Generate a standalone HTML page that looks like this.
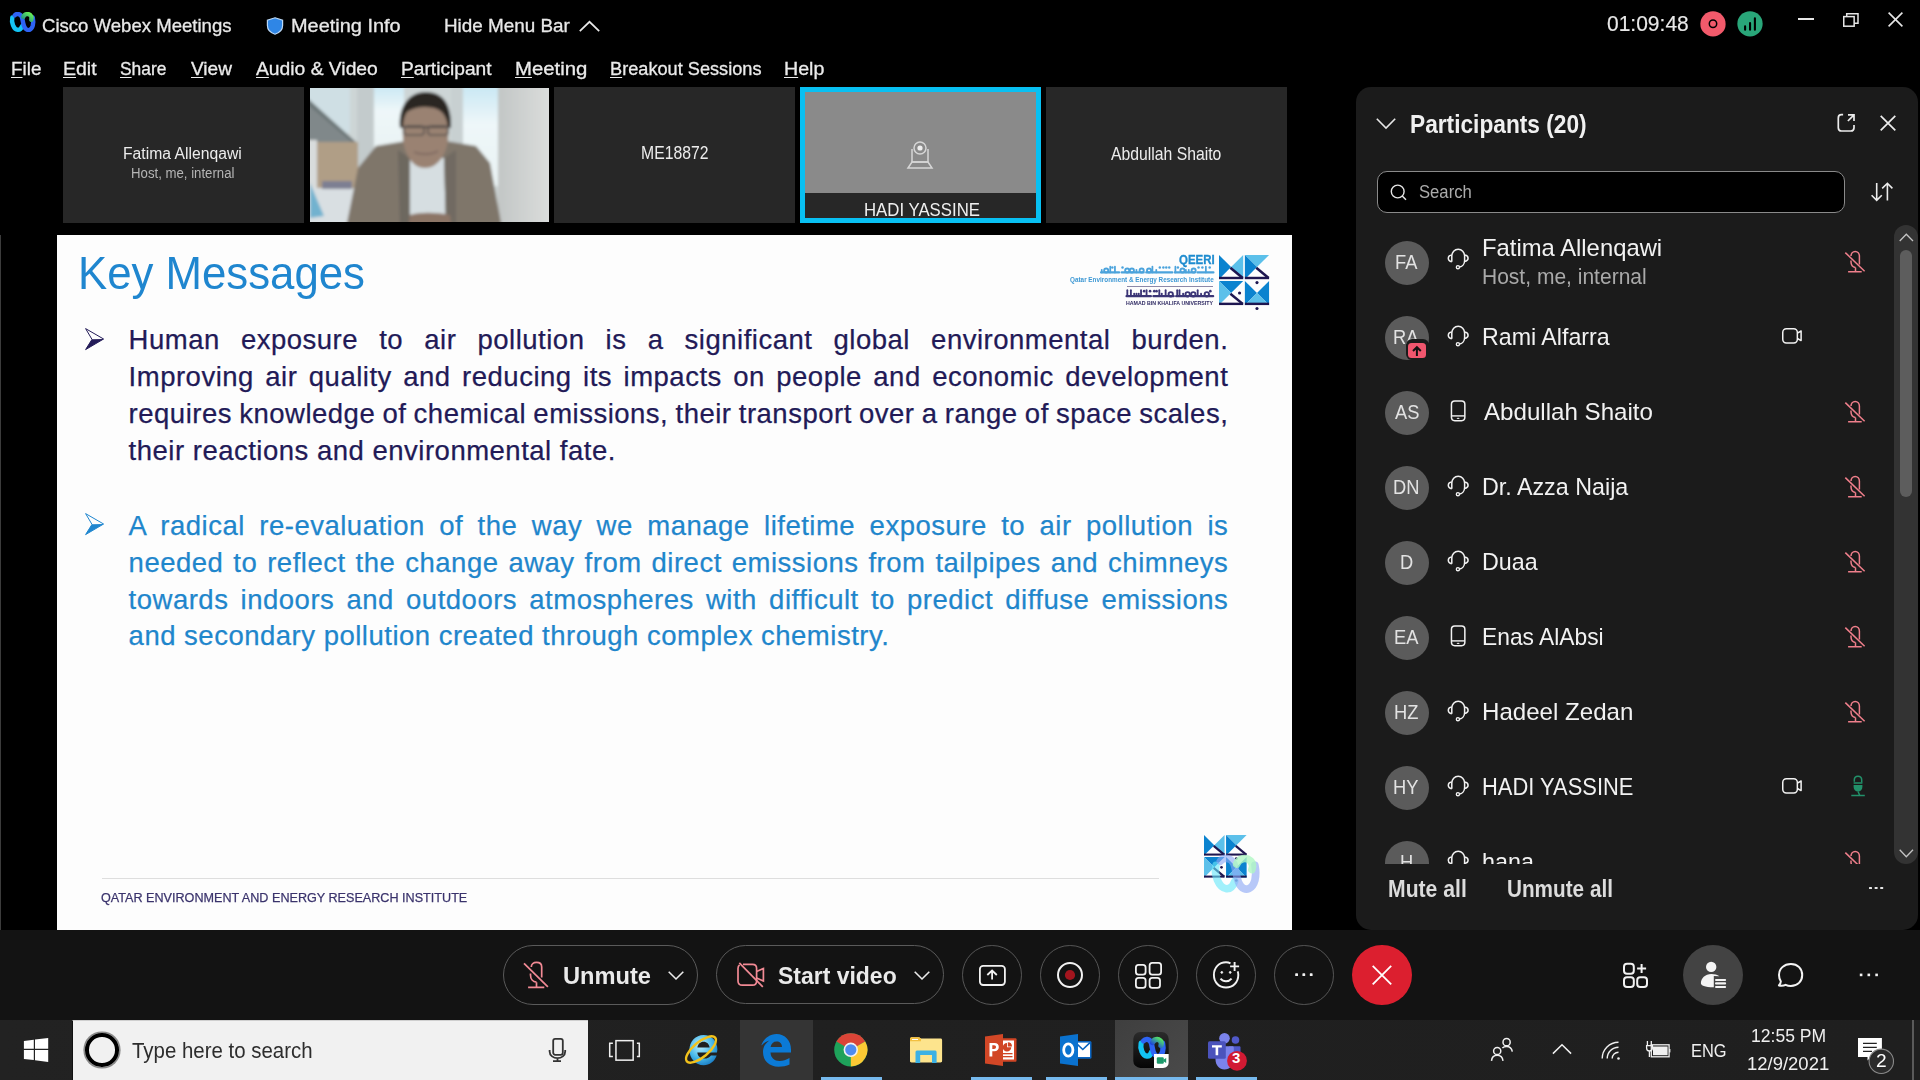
<!DOCTYPE html>
<html><head><meta charset="utf-8">
<style>
*{margin:0;padding:0;box-sizing:border-box}
html,body{width:1920px;height:1080px;overflow:hidden;background:#000}
body{position:relative;font-family:"Liberation Sans",sans-serif;color:#fff}
.a{position:absolute}
.t{position:absolute;white-space:pre;line-height:1}
svg{position:absolute;overflow:visible}
.ln{position:absolute;white-space:nowrap;line-height:1;text-align:justify;text-align-last:justify;-webkit-text-stroke:0.25px currentColor}
.ln.nj{text-align:left;text-align-last:left}
.tile{position:absolute;top:87px;width:241px;height:136px;background:#272727}
.circ{position:absolute;top:945.2px;width:59.6px;height:59.6px;border-radius:50%;border:1.8px solid #565656}
</style></head>
<body>

<svg style="left:6px;top:8.8px" width="34" height="26" viewBox="0 0 34 26">
<defs><linearGradient id="wxg" x1="0" y1="1" x2="1" y2="0"><stop offset="0" stop-color="#1e8f86"/><stop offset="1" stop-color="#66ee55"/></linearGradient>
<filter id="wxf"><feGaussianBlur stdDeviation="0.35"/></filter></defs>
<g filter="url(#wxf)" fill="none" stroke-width="4.4" stroke-linecap="round">
<path d="M6.3 8.6 C5.2 13.5 7.6 20.4 11.8 20.9 C14 21.1 15.4 19.3 16.2 17" stroke="#12c4f4"/>
<path d="M8.6 6.4 C10.3 4.3 14 4.3 15.6 7.6 C17.2 11 16.7 16.8 19.6 19.8 C22.2 22.4 25.6 21 26.8 16.5 C27.5 13.5 27.2 10.5 26.8 8.6" stroke="#2e64f4"/>
<path d="M17.2 8 C18.4 4.8 22.2 4.2 24.4 6.2 C25.4 7.2 25.8 9 25.2 10.8" stroke="url(#wxg)"/>
</g></svg>
<div class="t" style="left:41.57px;top:15.88px;font-size:19.04px;color:#e8e8e8;transform:scaleX(0.9754);transform-origin:0 0;-webkit-text-stroke:0.3px #e8e8e8;">Cisco Webex Meetings</div>
<svg style="left:265.5px;top:17px" width="18" height="18" viewBox="0 0 18 18">
<path d="M9 0.8 L16.6 3.3 V8.6 C16.6 13 13 16 9 17.2 C5 16 1.4 13 1.4 8.6 V3.3 Z" fill="#2f86e6" stroke="#bcd9f7" stroke-width="1.2"/></svg>
<div class="t" style="left:291.11px;top:17.15px;font-size:18.60px;color:#e8e8e8;transform:scaleX(1.0716);transform-origin:0 0;-webkit-text-stroke:0.3px #e8e8e8;">Meeting Info</div>
<div class="t" style="left:444.39px;top:17.15px;font-size:18.60px;color:#e8e8e8;transform:scaleX(1.0142);transform-origin:0 0;-webkit-text-stroke:0.3px #e8e8e8;">Hide Menu Bar</div>
<svg style="left:579px;top:20.5px" width="21" height="11" viewBox="0 0 21 11"><path d="M0.8 10.2 L10.5 0.8 L20.2 10.2" fill="none" stroke="#e8e8e8" stroke-width="1.7"/></svg>
<div class="t" style="left:1607.06px;top:11.71px;font-size:22.67px;color:#e8e8e8;transform:scaleX(0.9268);transform-origin:0 0;-webkit-text-stroke:0.15px #e8e8e8;">01:09:48</div>
<svg style="left:1700px;top:11px" width="64" height="26" viewBox="0 0 64 26">
<circle cx="13" cy="12.9" r="12.65" fill="#f25a6b"/><circle cx="13" cy="12.75" r="3.7" fill="none" stroke="#000" stroke-width="1.5"/>
<circle cx="50" cy="12.8" r="12.65" fill="#29a679"/>
<path d="M45.1 15.4 V18.7 M50.05 12 V18.7 M54.9 7.2 V18.7" stroke="#000" stroke-width="2.1" stroke-linecap="round"/></svg>
<div class="a" style="left:1798.3px;top:18.3px;width:15.5px;height:1.5px;background:#e6e6e6"></div>
<svg style="left:1843.3px;top:12.6px" width="16" height="14" viewBox="0 0 16 14"><rect x="0.75" y="3.6" width="10.4" height="9.6" fill="none" stroke="#e6e6e6" stroke-width="1.5"/><path d="M3.7 3.6 V0.75 H15 V10.3 H11.15" fill="none" stroke="#e6e6e6" stroke-width="1.5"/></svg>
<svg style="left:1888.3px;top:12.3px" width="15" height="15" viewBox="0 0 15 15"><path d="M0.6 0.6 L14.4 14.4 M14.4 0.6 L0.6 14.4" stroke="#e6e6e6" stroke-width="1.6"/></svg>

<div class="t" style="left:10.99px;top:60.27px;font-size:18.46px;color:#ebebeb;transform:scaleX(1.0215);transform-origin:0 0;-webkit-text-stroke:0.3px #ebebeb;"><span style="text-decoration:underline;text-decoration-thickness:1.2px;text-underline-offset:1.6px">F</span>ile</div>
<div class="t" style="left:63.44px;top:60.27px;font-size:18.46px;color:#ebebeb;transform:scaleX(1.0568);transform-origin:0 0;-webkit-text-stroke:0.3px #ebebeb;"><span style="text-decoration:underline;text-decoration-thickness:1.2px;text-underline-offset:1.6px">E</span>dit</div>
<div class="t" style="left:120.22px;top:60.27px;font-size:18.46px;color:#ebebeb;transform:scaleX(0.9440);transform-origin:0 0;-webkit-text-stroke:0.3px #ebebeb;"><span style="text-decoration:underline;text-decoration-thickness:1.2px;text-underline-offset:1.6px">S</span>hare</div>
<div class="t" style="left:191.00px;top:60.27px;font-size:18.46px;color:#ebebeb;transform:scaleX(1.0320);transform-origin:0 0;-webkit-text-stroke:0.3px #ebebeb;"><span style="text-decoration:underline;text-decoration-thickness:1.2px;text-underline-offset:1.6px">V</span>iew</div>
<div class="t" style="left:256.40px;top:60.27px;font-size:18.46px;color:#ebebeb;transform:scaleX(1.0449);transform-origin:0 0;-webkit-text-stroke:0.3px #ebebeb;"><span style="text-decoration:underline;text-decoration-thickness:1.2px;text-underline-offset:1.6px">A</span>udio &amp; Video</div>
<div class="t" style="left:400.96px;top:60.27px;font-size:18.46px;color:#ebebeb;transform:scaleX(1.0399);transform-origin:0 0;-webkit-text-stroke:0.3px #ebebeb;"><span style="text-decoration:underline;text-decoration-thickness:1.2px;text-underline-offset:1.6px">P</span>articipant</div>
<div class="t" style="left:515.17px;top:60.27px;font-size:18.46px;color:#ebebeb;transform:scaleX(1.1036);transform-origin:0 0;-webkit-text-stroke:0.3px #ebebeb;"><span style="text-decoration:underline;text-decoration-thickness:1.2px;text-underline-offset:1.6px">M</span>eeting</div>
<div class="t" style="left:610.14px;top:60.27px;font-size:18.46px;color:#ebebeb;transform:scaleX(0.9856);transform-origin:0 0;-webkit-text-stroke:0.3px #ebebeb;"><span style="text-decoration:underline;text-decoration-thickness:1.2px;text-underline-offset:1.6px">B</span>reakout Sessions</div>
<div class="t" style="left:784.43px;top:60.27px;font-size:18.46px;color:#ebebeb;transform:scaleX(1.0636);transform-origin:0 0;-webkit-text-stroke:0.3px #ebebeb;"><span style="text-decoration:underline;text-decoration-thickness:1.2px;text-underline-offset:1.6px">H</span>elp</div>
<div class="tile" style="left:63px"></div>
<div class="t" style="left:123.04px;top:145.10px;font-size:16.42px;color:#ececec;transform:scaleX(0.9573);transform-origin:0 0;">Fatima Allenqawi</div>
<div class="t" style="left:131.24px;top:167.49px;font-size:13.95px;color:#b5b5b5;transform:scaleX(0.9473);transform-origin:0 0;">Host, me, internal</div>
<div class="tile" style="left:309px;overflow:hidden;background:#000"></div>
<svg style="left:310px;top:88px;overflow:hidden" width="239" height="134" viewBox="0 0 239 134">
<defs><filter id="vb" x="-5%" y="-5%" width="110%" height="110%"><feGaussianBlur stdDeviation="1.6"/></filter>
<linearGradient id="rw" x1="0" y1="0" x2="1" y2="0"><stop offset="0" stop-color="#c2c6c5"/><stop offset="1" stop-color="#dcdedd"/></linearGradient>
<linearGradient id="win" x1="0" y1="0" x2="0" y2="1"><stop offset="0" stop-color="#c6e6f3"/><stop offset="0.4" stop-color="#eef7f9"/><stop offset="1" stop-color="#e9f2f3"/></linearGradient></defs>
<g filter="url(#vb)">
<rect x="-5" y="-5" width="250" height="145" fill="#cdd5d6"/>
<rect x="-5" y="-5" width="45" height="50" fill="#cfdfe4"/>
<rect x="64" y="-5" width="30" height="70" fill="url(#win)"/>
<rect x="47" y="-5" width="17" height="110" fill="#c3cbcc"/>
<rect x="153" y="-5" width="35" height="103" fill="url(#win)"/>
<rect x="141" y="-5" width="12" height="110" fill="#c8d0d1"/>
<rect x="188" y="-5" width="55" height="145" fill="url(#rw)"/>
<path d="M-5 8 L47 55 L47 62 L-5 40 Z" fill="#6a7476"/>
<path d="M-5 14 L44 56 L-5 56 Z" fill="#80888a"/>
<rect x="6" y="54" width="42" height="48" fill="#b09e86"/>
<rect x="-5" y="52" width="12" height="50" fill="#d8dcdc"/>
<rect x="-5" y="100" width="52" height="40" fill="#d9dfe2"/>
<path d="M0 95 L14 128 L0 130 Z" fill="#72b2cf"/>
<rect x="12" y="93" width="30" height="8" fill="#7d7f92"/>
<path d="M36 140 L48 80 L66 58 L96 53 L136 53 L166 58 L180 75 L192 140 Z" fill="#7f766b"/>
<path d="M98 70 L134 70 L136 140 L100 140 Z" fill="#d6dee1"/>
<path d="M88 62 L100 70 L100 140 L90 140 Z" fill="#6d675f"/>
<path d="M134 70 L146 62 L146 140 L136 140 Z" fill="#716b62"/>
<path d="M92 30 C92 18 102 8 116 8 C130 8 139 18 139 32 L138 52 C136 68 127 80 115 80 C103 80 95 68 93 52 Z" fill="#9a8272"/>
<path d="M90 40 C88 20 98 4 116 4 C134 4 142 18 141 40 L138 40 C137 28 132 22 124 20 C114 18 104 19 97 24 C94 28 93 34 93 40 Z" fill="#2b2523"/>
<path d="M92 39 H139" stroke="#4e4744" stroke-width="2"/>
<rect x="94" y="38" width="20" height="9" rx="3" fill="none" stroke="#5a534f" stroke-width="1.6"/><rect x="118" y="38" width="20" height="9" rx="3" fill="none" stroke="#5a534f" stroke-width="1.6"/>
<path d="M104 64 C110 67 122 67 128 63" stroke="#7d6860" stroke-width="1.6" fill="none"/>
<path d="M100 127 C110 124 125 124 140 127 L142 140 L98 140 Z" fill="#8c7466"/>
</g></svg>
<div class="tile" style="left:554px"></div>
<div class="t" style="left:640.54px;top:144.44px;font-size:18.02px;color:#ececec;transform:scaleX(0.8747);transform-origin:0 0;">ME18872</div>
<div class="tile" style="left:800px;background:#08c0f2">
 <div class="a" style="left:5px;top:5px;width:231px;height:101px;background:#8a8a8a"></div>
 <div class="a" style="left:5px;top:106px;width:231px;height:25px;background:#272727"></div>
</div>
<svg style="left:906px;top:141px" width="28" height="28" viewBox="0 0 28 28" fill="none" stroke="#d6d6d6" stroke-width="1.5">
<circle cx="14" cy="7" r="6"/><circle cx="14" cy="7" r="2.6" fill="#eee" stroke="none"/>
<path d="M6 8 V21 H22 V8"/><path d="M2 27 L6 21 H22 L26 27 Z"/></svg>
<div class="t" style="left:863.56px;top:200.18px;font-size:19.04px;color:#f0f0f0;transform:scaleX(0.8820);transform-origin:0 0;">HADI YASSINE</div>
<div class="tile" style="left:1046px"></div>
<div class="t" style="left:1111.00px;top:143.58px;font-size:19.04px;color:#ececec;transform:scaleX(0.8273);transform-origin:0 0;">Abdullah Shaito</div>
<div class="a" style="left:0;top:235px;width:1px;height:695px;background:#3c3c3c"></div>
<div class="a" style="left:57px;top:235px;width:1235px;height:695px;background:#fdfdfd"></div>
<div class="t" style="left:77.70px;top:249.34px;font-size:47.09px;color:#1f86cf;transform:scaleX(0.9293);transform-origin:0 0;">Key Messages</div>
<svg style="left:85px;top:328px" width="19" height="22" viewBox="0 0 19 22"><path d="M0.6 0.6 L18.6 11 L0.6 21.6 L7 11.4 Z" fill="#fdfdfd" stroke="#231b58" stroke-width="1"/><path d="M7 11.2 L18.6 11 L0.6 21.6 Z" fill="#231b58"/></svg>
<svg style="left:85px;top:513.3px" width="19" height="22" viewBox="0 0 19 22"><path d="M0.6 0.6 L18.6 11 L0.6 21.6 L7 11.4 Z" fill="#fdfdfd" stroke="#1f86cf" stroke-width="1"/><path d="M7 11.2 L18.6 11 L0.6 21.6 Z" fill="#1f86cf"/></svg>
<div class="ln" style="left:128.60px;top:326.32px;width:1099.70px;font-size:27.5px;letter-spacing:0.5px;color:#221a57;">Human exposure to air pollution is a significant global environmental burden.</div>
<div class="ln" style="left:128.60px;top:363.22px;width:1099.70px;font-size:27.5px;letter-spacing:0.5px;color:#221a57;">Improving air quality and reducing its impacts on people and economic development</div>
<div class="ln" style="left:128.60px;top:400.02px;width:1099.70px;font-size:27.5px;letter-spacing:0.5px;color:#221a57;word-spacing:-1.4px">requires knowledge of chemical emissions, their transport over a range of space scales,</div>
<div class="ln nj" style="left:128.60px;top:436.92px;width:1099.70px;font-size:27.5px;letter-spacing:0.5px;color:#221a57;">their reactions and environmental fate.</div>
<div class="ln" style="left:128.60px;top:512.02px;width:1099.70px;font-size:27.5px;letter-spacing:0.5px;color:#1f86cc;">A radical re-evaluation of the way we manage lifetime exposure to air pollution is</div>
<div class="ln" style="left:128.60px;top:548.92px;width:1099.70px;font-size:27.5px;letter-spacing:0.5px;color:#1f86cc;">needed to reflect the change away from direct emissions from tailpipes and chimneys</div>
<div class="ln" style="left:128.60px;top:585.62px;width:1099.70px;font-size:27.5px;letter-spacing:0.5px;color:#1f86cc;">towards indoors and outdoors atmospheres with difficult to predict diffuse emissions</div>
<div class="ln nj" style="left:128.60px;top:622.42px;width:1099.70px;font-size:27.5px;letter-spacing:0.5px;color:#1f86cc;">and secondary pollution created through complex chemistry.</div>
<div class="a" style="left:101.5px;top:877.6px;width:1057px;height:1.5px;background:#dedede"></div>
<div class="t" style="left:100.93px;top:891.13px;font-size:13.66px;color:#3a336c;transform:scaleX(0.9235);transform-origin:0 0;-webkit-text-stroke:0.25px #3a336c;">QATAR ENVIRONMENT AND ENERGY RESEARCH INSTITUTE</div>
<svg style="left:1219.3px;top:254.9px" width="50.09" height="50.09" viewBox="0 0 50.09 50.09"><path d="M0.00 0.00 L0.00 24.20 L12.10 12.10 Z" fill="#0b83cf"/><path d="M24.20 0.00 L24.20 24.20 L12.10 12.10 Z" fill="#5cc0ea"/><rect x="0.00" y="21.78" width="24.20" height="2.42" fill="#1e1650"/><path d="M11.37 12.83 L23.72 22.99" stroke="#1e1650" stroke-width="2.54"/><path d="M25.89 0.00 L50.09 0.00 L37.99 12.10 Z" fill="#5cc0ea"/><path d="M25.89 0.00 L25.89 24.20 L37.99 12.10 Z" fill="#0b83cf"/><rect x="25.89" y="21.78" width="24.20" height="2.42" fill="#1e1650"/><path d="M37.27 12.83 L49.61 22.99" stroke="#1e1650" stroke-width="2.54"/><path d="M0.00 25.89 L24.20 25.89 L12.10 37.99 Z" fill="#0b83cf"/><path d="M0.00 25.89 L0.00 50.09 L12.10 37.99 Z" fill="#5cc0ea"/><rect x="0.00" y="47.67" width="24.20" height="2.42" fill="#1e1650"/><path d="M11.37 38.72 L23.72 48.88" stroke="#1e1650" stroke-width="2.54"/><path d="M25.89 25.89 L25.89 50.09 L37.99 37.99 Z" fill="#0b83cf"/><path d="M50.09 25.89 L50.09 50.09 L37.99 37.99 Z" fill="#0b83cf"/><path d="M25.89 50.09 L50.09 50.09 L37.99 37.99 Z" fill="#5cc0ea"/><rect x="25.89" y="47.67" width="24.20" height="2.42" fill="#1e1650"/><circle cx="20.57" cy="37.99" r="1.57" fill="#1e1650"/><circle cx="37.99" cy="27.59" r="1.57" fill="#1e1650"/><circle cx="37.99" cy="53.48" r="1.57" fill="#1e1650"/></svg>
<svg style="left:0;top:0" width="1" height="1" viewBox="0 0 1 1"><g style="filter:blur(0.25px)"><path d="M1101.00 272.40 H1119.15" stroke="#4ba3dc" stroke-width="2.07" stroke-linecap="round"/><path d="M1101.74 272.40 V269.87" stroke="#4ba3dc" stroke-width="1.76" stroke-linecap="round"/><ellipse cx="1106.18" cy="270.56" rx="2.07" ry="2.07" fill="none" stroke="#4ba3dc" stroke-width="1.86"/><path d="M1110.24 272.40 V266.65" stroke="#4ba3dc" stroke-width="1.76" stroke-linecap="round"/><circle cx="1112.34" cy="267.57" r="1.24" fill="#4ba3dc"/><path d="M1114.94 272.40 V266.65" stroke="#4ba3dc" stroke-width="1.76" stroke-linecap="round"/><path d="M1121.56 272.40 H1143.74" stroke="#4ba3dc" stroke-width="2.07" stroke-linecap="round"/><circle cx="1122.53" cy="267.57" r="1.24" fill="#4ba3dc"/><ellipse cx="1127.20" cy="270.56" rx="2.07" ry="2.07" fill="none" stroke="#4ba3dc" stroke-width="1.86"/><ellipse cx="1131.88" cy="270.56" rx="2.07" ry="2.07" fill="none" stroke="#4ba3dc" stroke-width="1.86"/><path d="M1136.44 272.40 V269.87" stroke="#4ba3dc" stroke-width="1.76" stroke-linecap="round"/><ellipse cx="1141.65" cy="270.56" rx="2.07" ry="2.07" fill="none" stroke="#4ba3dc" stroke-width="1.86"/><path d="M1146.16 272.40 H1172.37" stroke="#4ba3dc" stroke-width="2.07" stroke-linecap="round"/><ellipse cx="1149.03" cy="270.56" rx="2.07" ry="2.07" fill="none" stroke="#4ba3dc" stroke-width="1.86"/><path d="M1152.41 272.40 V266.65" stroke="#4ba3dc" stroke-width="1.76" stroke-linecap="round"/><path d="M1156.27 272.40 V269.87" stroke="#4ba3dc" stroke-width="1.76" stroke-linecap="round"/><circle cx="1159.83" cy="267.57" r="1.24" fill="#4ba3dc"/><circle cx="1163.38" cy="267.57" r="1.24" fill="#4ba3dc"/><circle cx="1166.27" cy="267.57" r="1.24" fill="#4ba3dc"/><circle cx="1169.26" cy="267.57" r="1.24" fill="#4ba3dc"/><path d="M1174.79 272.40 H1194.95" stroke="#4ba3dc" stroke-width="2.07" stroke-linecap="round"/><path d="M1175.39 272.40 V266.65" stroke="#4ba3dc" stroke-width="1.76" stroke-linecap="round"/><circle cx="1177.91" cy="267.57" r="1.24" fill="#4ba3dc"/><ellipse cx="1182.49" cy="270.56" rx="2.07" ry="2.07" fill="none" stroke="#4ba3dc" stroke-width="1.86"/><path d="M1185.87 272.40 V269.87" stroke="#4ba3dc" stroke-width="1.76" stroke-linecap="round"/><path d="M1188.74 272.40 V269.87" stroke="#4ba3dc" stroke-width="1.76" stroke-linecap="round"/><ellipse cx="1193.63" cy="270.56" rx="2.07" ry="2.07" fill="none" stroke="#4ba3dc" stroke-width="1.86"/><path d="M1197.37 272.40 H1213.50" stroke="#4ba3dc" stroke-width="2.07" stroke-linecap="round"/><circle cx="1198.55" cy="267.57" r="1.24" fill="#4ba3dc"/><circle cx="1202.40" cy="267.57" r="1.24" fill="#4ba3dc"/><path d="M1205.86 272.40 V266.65" stroke="#4ba3dc" stroke-width="1.76" stroke-linecap="round"/><circle cx="1209.71" cy="267.57" r="1.24" fill="#4ba3dc"/></g></svg>
<svg style="left:0;top:0" width="1" height="1" viewBox="0 0 1 1"><g style="filter:blur(0.25px)"><path d="M1126.50 296.20 H1150.92" stroke="#3b3576" stroke-width="2.16" stroke-linecap="round"/><path d="M1127.32 296.20 V290.20" stroke="#3b3576" stroke-width="1.84" stroke-linecap="round"/><path d="M1130.89 296.20 V290.20" stroke="#3b3576" stroke-width="1.84" stroke-linecap="round"/><path d="M1134.21 296.20 V293.56" stroke="#3b3576" stroke-width="1.84" stroke-linecap="round"/><path d="M1136.49 296.20 V293.56" stroke="#3b3576" stroke-width="1.84" stroke-linecap="round"/><path d="M1138.73 296.20 V293.56" stroke="#3b3576" stroke-width="1.84" stroke-linecap="round"/><path d="M1141.04 296.20 V290.20" stroke="#3b3576" stroke-width="1.84" stroke-linecap="round"/><circle cx="1144.12" cy="291.16" r="1.30" fill="#3b3576"/><path d="M1146.55 296.20 V290.20" stroke="#3b3576" stroke-width="1.84" stroke-linecap="round"/><circle cx="1150.06" cy="291.16" r="1.30" fill="#3b3576"/><path d="M1153.36 296.20 H1173.72" stroke="#3b3576" stroke-width="2.16" stroke-linecap="round"/><circle cx="1154.26" cy="291.16" r="1.30" fill="#3b3576"/><circle cx="1156.52" cy="291.16" r="1.30" fill="#3b3576"/><path d="M1159.31 296.20 V290.20" stroke="#3b3576" stroke-width="1.84" stroke-linecap="round"/><path d="M1161.72 296.20 V293.56" stroke="#3b3576" stroke-width="1.84" stroke-linecap="round"/><path d="M1165.64 296.20 V290.20" stroke="#3b3576" stroke-width="1.84" stroke-linecap="round"/><ellipse cx="1170.74" cy="294.28" rx="2.16" ry="2.16" fill="none" stroke="#3b3576" stroke-width="1.94"/><path d="M1176.16 296.20 H1188.37" stroke="#3b3576" stroke-width="2.16" stroke-linecap="round"/><path d="M1177.21 296.20 V290.20" stroke="#3b3576" stroke-width="1.84" stroke-linecap="round"/><path d="M1179.50 296.20 V290.20" stroke="#3b3576" stroke-width="1.84" stroke-linecap="round"/><path d="M1183.13 296.20 V293.56" stroke="#3b3576" stroke-width="1.84" stroke-linecap="round"/><ellipse cx="1187.64" cy="294.28" rx="2.16" ry="2.16" fill="none" stroke="#3b3576" stroke-width="1.94"/><path d="M1190.81 296.20 H1213.20" stroke="#3b3576" stroke-width="2.16" stroke-linecap="round"/><ellipse cx="1193.29" cy="294.28" rx="2.16" ry="2.16" fill="none" stroke="#3b3576" stroke-width="1.94"/><path d="M1197.68 296.20 V290.20" stroke="#3b3576" stroke-width="1.84" stroke-linecap="round"/><path d="M1201.08 296.20 V293.56" stroke="#3b3576" stroke-width="1.84" stroke-linecap="round"/><ellipse cx="1206.81" cy="294.28" rx="2.16" ry="2.16" fill="none" stroke="#3b3576" stroke-width="1.94"/><circle cx="1210.32" cy="291.16" r="1.30" fill="#3b3576"/></g></svg>
<div class="t" style="left:1178.54px;top:252.80px;font-size:13.23px;color:#1f8ccf;font-weight:bold;transform:scaleX(0.8669);transform-origin:0 0;-webkit-text-stroke:0.35px #1f8ccf;">QEERI</div>
<div class="t" style="left:1069.75px;top:276.57px;font-size:7.12px;color:#3d98d4;font-weight:bold;transform:scaleX(0.8937);transform-origin:0 0;">Qatar Environment &amp; Energy Research Institute</div>
<div class="a" style="left:1126.9px;top:286.2px;width:86.6px;height:1.2px;background:#8d89a8"></div>
<div class="t" style="left:1125.96px;top:300.87px;font-size:5.23px;color:#2f2a63;font-weight:bold;transform:scaleX(1.0044);transform-origin:0 0;">HAMAD BIN KHALIFA UNIVERSITY</div>
<svg style="left:1203.7px;top:835px" width="42.64" height="42.64" viewBox="0 0 42.64 42.64"><path d="M0.00 0.00 L0.00 20.60 L10.30 10.30 Z" fill="#0b83cf"/><path d="M20.60 0.00 L20.60 20.60 L10.30 10.30 Z" fill="#5cc0ea"/><rect x="0.00" y="18.54" width="20.60" height="2.06" fill="#1e1650"/><path d="M9.68 10.92 L20.19 19.57" stroke="#1e1650" stroke-width="2.16"/><path d="M22.04 0.00 L42.64 0.00 L32.34 10.30 Z" fill="#5cc0ea"/><path d="M22.04 0.00 L22.04 20.60 L32.34 10.30 Z" fill="#0b83cf"/><rect x="22.04" y="18.54" width="20.60" height="2.06" fill="#1e1650"/><path d="M31.72 10.92 L42.23 19.57" stroke="#1e1650" stroke-width="2.16"/><path d="M0.00 22.04 L20.60 22.04 L10.30 32.34 Z" fill="#0b83cf"/><path d="M0.00 22.04 L0.00 42.64 L10.30 32.34 Z" fill="#5cc0ea"/><rect x="0.00" y="40.58" width="20.60" height="2.06" fill="#1e1650"/><path d="M9.68 32.96 L20.19 41.61" stroke="#1e1650" stroke-width="2.16"/><path d="M22.04 22.04 L22.04 42.64 L32.34 32.34 Z" fill="#0b83cf"/><path d="M42.64 22.04 L42.64 42.64 L32.34 32.34 Z" fill="#0b83cf"/><path d="M22.04 42.64 L42.64 42.64 L32.34 32.34 Z" fill="#5cc0ea"/><rect x="22.04" y="40.58" width="20.60" height="2.06" fill="#1e1650"/><circle cx="17.51" cy="32.34" r="1.34" fill="#1e1650"/><circle cx="32.34" cy="23.48" r="1.34" fill="#1e1650"/><circle cx="32.34" cy="45.53" r="1.34" fill="#1e1650"/></svg>
<svg style="left:1204px;top:849.4px" width="66" height="50" viewBox="0 0 66 50">
<g transform="scale(1.9)" fill="none" stroke-width="4" stroke-linecap="round" style="filter:blur(0.4px)">
<path d="M6.3 8.6 C5.2 13.5 7.6 20.4 11.8 20.9 C14 21.1 15.4 19.3 16.2 17" stroke="rgba(105,232,250,0.62)"/>
<path d="M8.6 6.4 C10.3 4.3 14 4.3 15.6 7.6 C17.2 11 16.7 16.8 19.6 19.8 C22.2 22.4 25.6 21 26.8 16.5 C27.5 13.5 27.2 10.5 26.8 8.6" stroke="rgba(140,168,246,0.62)"/>
<path d="M17.2 8 C18.4 4.8 22.2 4.2 24.4 6.2 C25.4 7.2 25.8 9 25.2 10.8" stroke="rgba(175,248,195,0.8)"/>
</g></svg>
<div class="a" style="left:1356px;top:87px;width:562px;height:842.5px;background:#1b1b1b;border-radius:15px"></div>
<svg style="left:1376px;top:118px" width="20" height="11" viewBox="0 0 20 11"><path d="M0.8 0.8 L10 10 L19.2 0.8" fill="none" stroke="#e6e6e6" stroke-width="1.6"/></svg>
<div class="t" style="left:1409.92px;top:111.55px;font-size:25.58px;color:#f0f0f0;font-weight:bold;transform:scaleX(0.8876);transform-origin:0 0;">Participants (20)</div>
<svg style="left:1830px;top:105px" width="70" height="35" viewBox="0 0 70 35" fill="none" stroke="#ececec" stroke-width="1.7">
<path d="M13.1 9.7 H11.5 C9.5 9.7 8.3 11 8.3 13 V22.7 C8.3 24.7 9.5 26 11.5 26 H20.8 C22.8 26 24 24.7 24 22.7 V20"/>
<path d="M17.9 16 L24 9.9 M18 9.9 H24 V16"/>
<path d="M50.7 10.9 L65.3 25.3 M65.3 10.9 L50.7 25.3"/></svg>
<div class="a" style="left:1377px;top:171.4px;width:468px;height:41.4px;border-radius:10px;border:1.6px solid #8a8a8a;background:#000"></div>
<svg style="left:1390px;top:184px" width="18" height="17" viewBox="0 0 18 17"><circle cx="7.7" cy="7.5" r="6.4" fill="none" stroke="#e6e6e6" stroke-width="1.4"/><path d="M12.2 12 L16 15.8" stroke="#e6e6e6" stroke-width="1.5"/></svg>
<div class="t" style="left:1418.75px;top:183.01px;font-size:18.90px;color:#ababab;transform:scaleX(0.8814);transform-origin:0 0;">Search</div>
<svg style="left:1865px;top:175px" width="35" height="35" viewBox="0 0 35 35" fill="none" stroke="#ececec" stroke-width="1.6">
<path d="M11.7 8.1 V25.4 M6.6 20.3 L11.7 25.4 L16.8 20.3"/><path d="M22.4 8.3 V25.6 M17.2 13.4 L22.4 8.3 L27.4 13.4"/></svg>
<div class="a" style="left:1356px;top:225px;width:535px;height:639px;overflow:hidden">
<div class="a" style="left:28.5px;top:15.5px;width:44px;height:44px;border-radius:50%;background:#5b5b5b"></div>
<div class="t" style="left:38.54px;top:27.94px;font-size:19.91px;color:#e2e2e2;transform:scaleX(0.92);transform-origin:0 0">FA</div>
<svg style="left:91px;top:22.5px" width="22" height="22" viewBox="0 0 22 22"><path d="M4.8 13.7 V8 C4.8 4 7.6 1.3 11.2 1.3 C14.8 1.3 17.6 4 17.6 8 V12.6 C17.6 16.3 15 18.7 12.6 19.1" fill="none" stroke="#f2f2f2" stroke-width="1.5"/><circle cx="10.9" cy="19.2" r="1.55" fill="none" stroke="#f2f2f2" stroke-width="1.4"/><path d="M4.8 6.9 C2.6 7.2 1.3 8.6 1.3 10.3 C1.3 12 2.6 13.4 4.8 13.7 M17.6 7 C19.8 7.3 21.1 8.7 21.1 10.3 C21.1 11.9 19.8 13.1 17.6 13.4" fill="none" stroke="#f2f2f2" stroke-width="1.5"/></svg>
<div class="t" style="left:126.09px;top:11.08px;font-size:24.71px;color:#f2f2f2;transform:scaleX(0.9647);transform-origin:0 0">Fatima Allenqawi</div>
<div class="t" style="left:126.32px;top:40.94px;font-size:21.22px;color:#a9a9a9;transform:scaleX(0.9903);transform-origin:0 0">Host, me, internal</div>
<svg style="left:488px;top:25.0px" width="22" height="23" viewBox="0 0 22 23"><g fill="none" stroke="#ef7f8b" stroke-width="1.5"><path d="M1.3 2.6 L20.6 21.2"/><path d="M7 6 C7 3.4 8.8 1.4 11.2 1.4 C13.6 1.4 15.4 3.4 15.4 6 V14.6"/><path d="M7 10.5 V11.8 C7 15 9 17.2 11.5 17.5 M11.5 17.5 V21.6 M4.1 21.7 H17.7"/></g></svg>
<div class="a" style="left:28.5px;top:90.5px;width:44px;height:44px;border-radius:50%;background:#5b5b5b"></div>
<div class="t" style="left:37.02px;top:102.94px;font-size:19.91px;color:#e2e2e2;transform:scaleX(0.92);transform-origin:0 0">RA</div>
<svg style="left:91px;top:100.0px" width="22" height="22" viewBox="0 0 22 22"><path d="M4.8 13.7 V8 C4.8 4 7.6 1.3 11.2 1.3 C14.8 1.3 17.6 4 17.6 8 V12.6 C17.6 16.3 15 18.7 12.6 19.1" fill="none" stroke="#f2f2f2" stroke-width="1.5"/><circle cx="10.9" cy="19.2" r="1.55" fill="none" stroke="#f2f2f2" stroke-width="1.4"/><path d="M4.8 6.9 C2.6 7.2 1.3 8.6 1.3 10.3 C1.3 12 2.6 13.4 4.8 13.7 M17.6 7 C19.8 7.3 21.1 8.7 21.1 10.3 C21.1 11.9 19.8 13.1 17.6 13.4" fill="none" stroke="#f2f2f2" stroke-width="1.5"/></svg>
<div class="t" style="left:126.14px;top:99.78px;font-size:24.71px;color:#f2f2f2;transform:scaleX(0.9400);transform-origin:0 0">Rami Alfarra</div>
<svg style="left:419px;top:95.1px" width="35" height="35" viewBox="0 0 35 35"><rect x="7.75" y="8.85" width="14.6" height="14.1" rx="3.6" fill="none" stroke="#f2f2f2" stroke-width="1.5"/><path d="M22.4 13.2 L26.1 11 V20.6 L22.4 18.5" fill="none" stroke="#f2f2f2" stroke-width="1.5" stroke-linejoin="round"/></svg>
<div class="a" style="left:49.59999999999991px;top:114px;width:23px;height:21px;border-radius:6px;background:#1b1b1b"></div>
<div class="a" style="left:52.200000000000045px;top:118.19999999999999px;width:17.8px;height:15.3px;border-radius:3.5px;background:#f1566e"></div>
<svg style="left:52.200000000000045px;top:118.19999999999999px" width="18" height="16" viewBox="0 0 18 16"><path d="M8.9 13 V4.2 M5 8 L8.9 4.2 L12.8 8" fill="none" stroke="#111" stroke-width="2"/></svg>
<div class="a" style="left:28.5px;top:165.5px;width:44px;height:44px;border-radius:50%;background:#5b5b5b"></div>
<div class="t" style="left:38.67px;top:177.94px;font-size:19.91px;color:#e2e2e2;transform:scaleX(0.92);transform-origin:0 0">AS</div>
<svg style="left:94px;top:175.1px" width="17" height="22" viewBox="0 0 17 22"><rect x="1.45" y="1.05" width="13.4" height="19.6" rx="3.3" fill="none" stroke="#f2f2f2" stroke-width="1.5"/><path d="M1.5 15.9 H14.8" stroke="#f2f2f2" stroke-width="1.4"/><ellipse cx="8.1" cy="18.3" rx="1.5" ry="0.6" fill="#f2f2f2"/></svg>
<div class="t" style="left:128.00px;top:174.78px;font-size:24.71px;color:#f2f2f2;transform:scaleX(0.9763);transform-origin:0 0">Abdullah Shaito</div>
<svg style="left:488px;top:175.0px" width="22" height="23" viewBox="0 0 22 23"><g fill="none" stroke="#ef7f8b" stroke-width="1.5"><path d="M1.3 2.6 L20.6 21.2"/><path d="M7 6 C7 3.4 8.8 1.4 11.2 1.4 C13.6 1.4 15.4 3.4 15.4 6 V14.6"/><path d="M7 10.5 V11.8 C7 15 9 17.2 11.5 17.5 M11.5 17.5 V21.6 M4.1 21.7 H17.7"/></g></svg>
<div class="a" style="left:28.5px;top:240.5px;width:44px;height:44px;border-radius:50%;background:#5b5b5b"></div>
<div class="t" style="left:37.24px;top:252.94px;font-size:19.91px;color:#e2e2e2;transform:scaleX(0.92);transform-origin:0 0">DN</div>
<svg style="left:91px;top:250.0px" width="22" height="22" viewBox="0 0 22 22"><path d="M4.8 13.7 V8 C4.8 4 7.6 1.3 11.2 1.3 C14.8 1.3 17.6 4 17.6 8 V12.6 C17.6 16.3 15 18.7 12.6 19.1" fill="none" stroke="#f2f2f2" stroke-width="1.5"/><circle cx="10.9" cy="19.2" r="1.55" fill="none" stroke="#f2f2f2" stroke-width="1.4"/><path d="M4.8 6.9 C2.6 7.2 1.3 8.6 1.3 10.3 C1.3 12 2.6 13.4 4.8 13.7 M17.6 7 C19.8 7.3 21.1 8.7 21.1 10.3 C21.1 11.9 19.8 13.1 17.6 13.4" fill="none" stroke="#f2f2f2" stroke-width="1.5"/></svg>
<div class="t" style="left:126.14px;top:249.78px;font-size:24.71px;color:#f2f2f2;transform:scaleX(0.9427);transform-origin:0 0">Dr. Azza Naija</div>
<svg style="left:488px;top:250.0px" width="22" height="23" viewBox="0 0 22 23"><g fill="none" stroke="#ef7f8b" stroke-width="1.5"><path d="M1.3 2.6 L20.6 21.2"/><path d="M7 6 C7 3.4 8.8 1.4 11.2 1.4 C13.6 1.4 15.4 3.4 15.4 6 V14.6"/><path d="M7 10.5 V11.8 C7 15 9 17.2 11.5 17.5 M11.5 17.5 V21.6 M4.1 21.7 H17.7"/></g></svg>
<div class="a" style="left:28.5px;top:315.5px;width:44px;height:44px;border-radius:50%;background:#5b5b5b"></div>
<div class="t" style="left:43.58px;top:327.94px;font-size:19.91px;color:#e2e2e2;transform:scaleX(0.92);transform-origin:0 0">D</div>
<svg style="left:91px;top:325.0px" width="22" height="22" viewBox="0 0 22 22"><path d="M4.8 13.7 V8 C4.8 4 7.6 1.3 11.2 1.3 C14.8 1.3 17.6 4 17.6 8 V12.6 C17.6 16.3 15 18.7 12.6 19.1" fill="none" stroke="#f2f2f2" stroke-width="1.5"/><circle cx="10.9" cy="19.2" r="1.55" fill="none" stroke="#f2f2f2" stroke-width="1.4"/><path d="M4.8 6.9 C2.6 7.2 1.3 8.6 1.3 10.3 C1.3 12 2.6 13.4 4.8 13.7 M17.6 7 C19.8 7.3 21.1 8.7 21.1 10.3 C21.1 11.9 19.8 13.1 17.6 13.4" fill="none" stroke="#f2f2f2" stroke-width="1.5"/></svg>
<div class="t" style="left:126.14px;top:324.78px;font-size:24.71px;color:#f2f2f2;transform:scaleX(0.9425);transform-origin:0 0">Duaa</div>
<svg style="left:488px;top:325.0px" width="22" height="23" viewBox="0 0 22 23"><g fill="none" stroke="#ef7f8b" stroke-width="1.5"><path d="M1.3 2.6 L20.6 21.2"/><path d="M7 6 C7 3.4 8.8 1.4 11.2 1.4 C13.6 1.4 15.4 3.4 15.4 6 V14.6"/><path d="M7 10.5 V11.8 C7 15 9 17.2 11.5 17.5 M11.5 17.5 V21.6 M4.1 21.7 H17.7"/></g></svg>
<div class="a" style="left:28.5px;top:390.5px;width:44px;height:44px;border-radius:50%;background:#5b5b5b"></div>
<div class="t" style="left:37.52px;top:402.94px;font-size:19.91px;color:#e2e2e2;transform:scaleX(0.92);transform-origin:0 0">EA</div>
<svg style="left:94px;top:400.1px" width="17" height="22" viewBox="0 0 17 22"><rect x="1.45" y="1.05" width="13.4" height="19.6" rx="3.3" fill="none" stroke="#f2f2f2" stroke-width="1.5"/><path d="M1.5 15.9 H14.8" stroke="#f2f2f2" stroke-width="1.4"/><ellipse cx="8.1" cy="18.3" rx="1.5" ry="0.6" fill="#f2f2f2"/></svg>
<div class="t" style="left:126.18px;top:399.78px;font-size:24.71px;color:#f2f2f2;transform:scaleX(0.9229);transform-origin:0 0">Enas AlAbsi</div>
<svg style="left:488px;top:400.0px" width="22" height="23" viewBox="0 0 22 23"><g fill="none" stroke="#ef7f8b" stroke-width="1.5"><path d="M1.3 2.6 L20.6 21.2"/><path d="M7 6 C7 3.4 8.8 1.4 11.2 1.4 C13.6 1.4 15.4 3.4 15.4 6 V14.6"/><path d="M7 10.5 V11.8 C7 15 9 17.2 11.5 17.5 M11.5 17.5 V21.6 M4.1 21.7 H17.7"/></g></svg>
<div class="a" style="left:28.5px;top:465.5px;width:44px;height:44px;border-radius:50%;background:#5b5b5b"></div>
<div class="t" style="left:37.84px;top:477.94px;font-size:19.91px;color:#e2e2e2;transform:scaleX(0.92);transform-origin:0 0">HZ</div>
<svg style="left:91px;top:475.0px" width="22" height="22" viewBox="0 0 22 22"><path d="M4.8 13.7 V8 C4.8 4 7.6 1.3 11.2 1.3 C14.8 1.3 17.6 4 17.6 8 V12.6 C17.6 16.3 15 18.7 12.6 19.1" fill="none" stroke="#f2f2f2" stroke-width="1.5"/><circle cx="10.9" cy="19.2" r="1.55" fill="none" stroke="#f2f2f2" stroke-width="1.4"/><path d="M4.8 6.9 C2.6 7.2 1.3 8.6 1.3 10.3 C1.3 12 2.6 13.4 4.8 13.7 M17.6 7 C19.8 7.3 21.1 8.7 21.1 10.3 C21.1 11.9 19.8 13.1 17.6 13.4" fill="none" stroke="#f2f2f2" stroke-width="1.5"/></svg>
<div class="t" style="left:126.07px;top:474.78px;font-size:24.71px;color:#f2f2f2;transform:scaleX(0.9753);transform-origin:0 0">Hadeel Zedan</div>
<svg style="left:488px;top:475.0px" width="22" height="23" viewBox="0 0 22 23"><g fill="none" stroke="#ef7f8b" stroke-width="1.5"><path d="M1.3 2.6 L20.6 21.2"/><path d="M7 6 C7 3.4 8.8 1.4 11.2 1.4 C13.6 1.4 15.4 3.4 15.4 6 V14.6"/><path d="M7 10.5 V11.8 C7 15 9 17.2 11.5 17.5 M11.5 17.5 V21.6 M4.1 21.7 H17.7"/></g></svg>
<div class="a" style="left:28.5px;top:540.5px;width:44px;height:44px;border-radius:50%;background:#5b5b5b"></div>
<div class="t" style="left:37.24px;top:552.94px;font-size:19.91px;color:#e2e2e2;transform:scaleX(0.92);transform-origin:0 0">HY</div>
<svg style="left:91px;top:550.0px" width="22" height="22" viewBox="0 0 22 22"><path d="M4.8 13.7 V8 C4.8 4 7.6 1.3 11.2 1.3 C14.8 1.3 17.6 4 17.6 8 V12.6 C17.6 16.3 15 18.7 12.6 19.1" fill="none" stroke="#f2f2f2" stroke-width="1.5"/><circle cx="10.9" cy="19.2" r="1.55" fill="none" stroke="#f2f2f2" stroke-width="1.4"/><path d="M4.8 6.9 C2.6 7.2 1.3 8.6 1.3 10.3 C1.3 12 2.6 13.4 4.8 13.7 M17.6 7 C19.8 7.3 21.1 8.7 21.1 10.3 C21.1 11.9 19.8 13.1 17.6 13.4" fill="none" stroke="#f2f2f2" stroke-width="1.5"/></svg>
<div class="t" style="left:126.25px;top:549.78px;font-size:24.71px;color:#f2f2f2;transform:scaleX(0.8872);transform-origin:0 0">HADI YASSINE</div>
<svg style="left:484px;top:545.0px" width="35" height="35" viewBox="0 0 35 35"><g fill="none" stroke="#22916a" stroke-width="1.5"><path d="M14.3 11.8 V10 C14.3 7.5 16 6.2 18 6.2 C20 6.2 21.7 7.5 21.7 10 V12.5"/><path d="M11.3 25.6 H24.8 M18 21.5 L19.6 25"/></g><path d="M13.6 12.3 H22.4 V13.8 H13.6 Z M13.6 15 H22.4 V17 C22.4 19.6 20.5 21.5 18 21.5 C15.5 21.5 13.6 19.6 13.6 17 Z" fill="#22916a"/></svg>
<svg style="left:419px;top:545.1px" width="35" height="35" viewBox="0 0 35 35"><rect x="7.75" y="8.85" width="14.6" height="14.1" rx="3.6" fill="none" stroke="#f2f2f2" stroke-width="1.5"/><path d="M22.4 13.2 L26.1 11 V20.6 L22.4 18.5" fill="none" stroke="#f2f2f2" stroke-width="1.5" stroke-linejoin="round"/></svg>
<div class="a" style="left:28.5px;top:615.5px;width:44px;height:44px;border-radius:50%;background:#5b5b5b"></div>
<div class="t" style="left:43.86px;top:627.94px;font-size:19.91px;color:#e2e2e2;transform:scaleX(0.92);transform-origin:0 0">H</div>
<svg style="left:91px;top:625.0px" width="22" height="22" viewBox="0 0 22 22"><path d="M4.8 13.7 V8 C4.8 4 7.6 1.3 11.2 1.3 C14.8 1.3 17.6 4 17.6 8 V12.6 C17.6 16.3 15 18.7 12.6 19.1" fill="none" stroke="#f2f2f2" stroke-width="1.5"/><circle cx="10.9" cy="19.2" r="1.55" fill="none" stroke="#f2f2f2" stroke-width="1.4"/><path d="M4.8 6.9 C2.6 7.2 1.3 8.6 1.3 10.3 C1.3 12 2.6 13.4 4.8 13.7 M17.6 7 C19.8 7.3 21.1 8.7 21.1 10.3 C21.1 11.9 19.8 13.1 17.6 13.4" fill="none" stroke="#f2f2f2" stroke-width="1.5"/></svg>
<div class="t" style="left:126.48px;top:624.78px;font-size:24.71px;color:#f2f2f2;transform:scaleX(0.9447);transform-origin:0 0">hana</div>
<svg style="left:488px;top:625.0px" width="22" height="23" viewBox="0 0 22 23"><g fill="none" stroke="#ef7f8b" stroke-width="1.5"><path d="M1.3 2.6 L20.6 21.2"/><path d="M7 6 C7 3.4 8.8 1.4 11.2 1.4 C13.6 1.4 15.4 3.4 15.4 6 V14.6"/><path d="M7 10.5 V11.8 C7 15 9 17.2 11.5 17.5 M11.5 17.5 V21.6 M4.1 21.7 H17.7"/></g></svg>
</div>
<div class="a" style="left:1894px;top:225px;width:24px;height:639px;border-radius:12px;background:#333"></div>
<div class="a" style="left:1900px;top:249.7px;width:12px;height:247.5px;border-radius:6px;background:#5d5d5d"></div>
<svg style="left:1899px;top:233px" width="15" height="9" viewBox="0 0 15 9"><path d="M0.7 8 L7.3 1.2 L14 8" fill="none" stroke="#c4c4c4" stroke-width="1.3"/></svg>
<svg style="left:1899px;top:849px" width="15" height="9" viewBox="0 0 15 9"><path d="M0.7 0.8 L7.3 7.8 L14 0.8" fill="none" stroke="#c4c4c4" stroke-width="1.3"/></svg>
<div class="t" style="left:1388.22px;top:876.78px;font-size:24.71px;color:#dcdcdc;font-weight:bold;transform:scaleX(0.8568);transform-origin:0 0;">Mute all</div>
<div class="t" style="left:1506.76px;top:876.78px;font-size:24.71px;color:#dcdcdc;font-weight:bold;transform:scaleX(0.8388);transform-origin:0 0;">Unmute all</div>
<div class="a" style="left:1869px;top:886.7px;width:2.6px;height:2.6px;background:#e6e6e6;border-radius:0.5px;box-shadow:5.6px 0 0 #e6e6e6, 11.2px 0 0 #e6e6e6"></div>
<div class="a" style="left:0;top:930px;width:1920px;height:90px;background:#131313"></div>
<div class="a" style="left:503.2px;top:945px;width:194.8px;height:59.6px;border-radius:30px;border:1.8px solid #5a5a5a"></div>
<div class="a" style="left:716.3px;top:945.2px;width:227.5px;height:59.3px;border-radius:30px;border:1.8px solid #5a5a5a"></div>
<svg style="left:520px;top:958px" width="32" height="34" viewBox="0 0 32 34"><g fill="none" stroke="#f28a95" stroke-width="1.7">
<path d="M4 5.4 L27.9 28.9"/><path d="M11.3 9 C11.3 6.2 13.5 4.4 16.5 4.4 C19.5 4.4 21.7 6.2 21.7 9 V19.5"/>
<path d="M10.5 15.5 V17 C10.5 21 13 24 16.5 24.2 M16.5 24.2 V29.4 M8.1 29.4 H24.3"/></g></svg>
<div class="t" style="left:563.18px;top:964.25px;font-size:24.27px;color:#eaeaea;font-weight:bold;transform:scaleX(0.9746);transform-origin:0 0;">Unmute</div>
<svg style="left:668px;top:970.5px" width="16" height="9" viewBox="0 0 16 9"><path d="M0.7 0.8 L8 8 L15.3 0.8" fill="none" stroke="#eaeaea" stroke-width="1.6"/></svg>
<svg style="left:735px;top:960px" width="32" height="30" viewBox="0 0 32 30"><g fill="none" stroke="#f28a95" stroke-width="1.7">
<path d="M8 4.3 H17.5 C20 4.3 21.6 5.9 21.6 8.4 V21 C21.6 23.5 20 25.2 17.5 25.2 H7.2 C4.6 25.2 3 23.5 3 21 V8.4 C3 6.8 3.6 5.6 4.6 4.9"/>
<path d="M21.6 11.5 L28.4 8.5 V21 L21.6 18"/><path d="M4.3 2.9 L27.8 26.9"/></g></svg>
<div class="t" style="left:778.43px;top:964.05px;font-size:24.27px;color:#eaeaea;font-weight:bold;transform:scaleX(0.9462);transform-origin:0 0;">Start video</div>
<svg style="left:914.2px;top:971px" width="16" height="9" viewBox="0 0 16 9"><path d="M0.7 0.8 L8 8 L15.3 0.8" fill="none" stroke="#eaeaea" stroke-width="1.6"/></svg>
<div class="circ" style="left:962.0px"></div>
<div class="circ" style="left:1040.2px"></div>
<div class="circ" style="left:1118.2px"></div>
<div class="circ" style="left:1196.0px"></div>
<div class="circ" style="left:1274.0px"></div>
<div class="a" style="left:1352.2px;top:945px;width:59.8px;height:59.8px;border-radius:50%;background:#dc1f2f"></div>
<svg style="left:970px;top:955px" width="44" height="40" viewBox="0 0 44 40" fill="none" stroke="#f2f2f2" stroke-width="1.8">
<rect x="9.9" y="10.8" width="25" height="19.2" rx="3.3"/><path d="M22.1 24.5 V16 M17.3 20 L22.1 15.5 L26.8 20"/></svg>
<svg style="left:1050px;top:955px" width="40" height="40" viewBox="0 0 40 40"><circle cx="20" cy="20" r="12" fill="none" stroke="#f2f2f2" stroke-width="2"/><circle cx="20" cy="20" r="5.1" fill="#a3151e"/></svg>
<svg style="left:1128px;top:955px" width="40" height="40" viewBox="0 0 40 40" fill="none" stroke="#f2f2f2" stroke-width="1.8">
<rect x="7.9" y="9.9" width="9.7" height="9.7" rx="2.6"/><rect x="21.6" y="7.8" width="11.5" height="11.8" rx="2.6"/><rect x="7.9" y="22.8" width="9.7" height="10.1" rx="2.6"/><rect x="21.6" y="22.8" width="10.4" height="10.1" rx="2.6"/></svg>
<svg style="left:1206px;top:955px" width="40" height="40" viewBox="0 0 40 40" fill="none" stroke="#f2f2f2" stroke-width="1.9">
<path d="M24.5 8.4 C23 7.6 21.6 7.3 20 7.3 C13 7.3 7.9 12.6 7.9 20 C7.9 27.3 13 32.5 20 32.5 C27 32.5 32.3 27.3 32.3 20 C32.3 18.7 32.1 17.5 31.7 16.4"/>
<path d="M14.5 23.6 C16 25.5 17.9 26.3 20 26.3 C22.1 26.3 24 25.5 25.6 23.6"/><path d="M28.6 6.9 V15.9 M24.1 11.4 H33.1"/>
<circle cx="15.8" cy="17.4" r="0.9" fill="#f2f2f2" stroke-width="1"/><circle cx="24.2" cy="17.4" r="0.9" fill="#f2f2f2" stroke-width="1"/></svg>
<svg style="left:1284px;top:955px" width="40" height="40" viewBox="0 0 40 40" fill="#f2f2f2"><rect x="11.2" y="18.3" width="2.8" height="2.8" rx="0.6"/><rect x="18.4" y="18.3" width="2.8" height="2.8" rx="0.6"/><rect x="25.8" y="18.3" width="2.8" height="2.8" rx="0.6"/></svg>
<svg style="left:1362px;top:955px" width="40" height="40" viewBox="0 0 40 40"><path d="M10.7 10.8 L29.2 29.3 M29.2 10.8 L10.7 29.3" stroke="#fff" stroke-width="1.8"/></svg>

<svg style="left:1615px;top:955px" width="40" height="40" viewBox="0 0 40 40" fill="none" stroke="#f2f2f2" stroke-width="2">
<rect x="9" y="8.7" width="9.8" height="10.1" rx="3"/><rect x="9" y="22.2" width="9.8" height="9.8" rx="3"/><rect x="22.2" y="22.2" width="9.8" height="9.8" rx="3"/><path d="M26.6 9 V18 M22.1 13.5 H31.1"/></svg>
<div class="a" style="left:1683px;top:945px;width:60px;height:60px;border-radius:50%;background:#434343"></div>
<svg style="left:1690px;top:950px" width="50" height="50" viewBox="0 0 50 50" fill="#f4f4f4">
<circle cx="21.2" cy="16.9" r="5.2"/><path d="M29.5 26.2 C27.2 24.8 24.5 24 21.4 24 C15 24 10.9 28.5 10.9 33.3 C10.9 35.5 14.5 37.3 23.8 37.3 V25.9 Z"/>
<rect x="25" y="28.9" width="11.1" height="2.2" rx="1"/><rect x="25" y="32.2" width="11.1" height="2.2" rx="1"/><rect x="25" y="35.9" width="11.1" height="2.2" rx="1"/></svg>
<svg style="left:1765px;top:950px" width="50" height="50" viewBox="0 0 50 50" fill="none" stroke="#f4f4f4" stroke-width="2">
<path d="M15.8 31.2 C14.6 29.4 14 27.3 14 25 C14 18.7 19 14 25.9 14 C32.7 14 37.2 18.7 37.2 25 C37.2 31.4 32.5 36 25.8 36 C24 36 22.2 35.6 20.6 34.8 C18.5 35.9 16 35.8 13.9 35.5 C15 34.2 15.9 32.8 15.8 31.2 Z" stroke-linejoin="round"/></svg>
<svg style="left:1855px;top:965px" width="30" height="20" viewBox="0 0 30 20" fill="#f4f4f4"><rect x="4.8" y="8.6" width="2.6" height="2.6"/><rect x="12.5" y="8.6" width="2.6" height="2.6"/><rect x="20.3" y="8.6" width="2.6" height="2.6"/></svg>

<div class="a" style="left:0;top:1020px;width:1920px;height:60px;background:linear-gradient(90deg,#222 0%,#202020 40%,#1f1f1f 100%)"></div>
<svg style="left:20px;top:1035px" width="32" height="30" viewBox="0 0 32 30" fill="#fff"><path d="M3.9 6 L13.8 4.8 V13.8 H3.9 Z M15 4.6 L28.2 2.9 V13.8 H15 Z M3.9 15 H13.8 V25.1 L3.9 24 Z M15 15 H28.2 V27 L15 25.3 Z"/></svg>
<div class="a" style="left:72px;top:1020px;width:516px;height:60px;background:#f1f1f1;border-left:1.5px solid #111;border-top:1px solid #cfcfcf"></div>
<div class="a" style="left:85.3px;top:1033px;width:33.5px;height:33.5px;border-radius:50%;border:4px solid #000;box-shadow:0 0 0 1.6px #8a8a8a"></div>
<div class="t" style="left:132.19px;top:1040.69px;font-size:21.51px;color:#2d2d2d;transform:scaleX(0.9502);transform-origin:0 0;">Type here to search</div>
<svg style="left:545px;top:1035px" width="24" height="30" viewBox="0 0 24 30" fill="none" stroke="#333" stroke-width="1.8">
<rect x="8.2" y="3.8" width="9.6" height="16" rx="2"/><path d="M4.6 15 V16.5 C4.6 20.5 8.5 23.2 12.5 23.2 C16.5 23.2 20.2 20.5 20.2 16.5 V15 M12.5 23.2 V26.2 M8 26.2 H16"/></svg>
<svg style="left:605px;top:1035px" width="40" height="30" viewBox="0 0 40 30" fill="none" stroke="#f0f0f0" stroke-width="1.5">
<rect x="10.95" y="5.65" width="17.2" height="19.5"/><path d="M7.9 8.3 H4.7 V21.5 H7.9 M31.9 8.3 H34.3 V21.5 H31.9"/></svg>
<svg style="left:680px;top:1030px" width="42" height="40" viewBox="0 0 42 40">
<defs><radialGradient id="ieg" cx="0.4" cy="0.35" r="0.7"><stop offset="0" stop-color="#bff0ff"/><stop offset="0.6" stop-color="#47b8ea"/><stop offset="1" stop-color="#1a7cc4"/></radialGradient></defs>
<path d="M37 22.5 H17.3 C17.8 26.5 20.6 28.6 24.4 28.6 C27.3 28.6 29.6 27.3 31 25.4 H36.7 C34.7 31.3 29.6 35.2 23.7 35.2 C15.6 35.2 9.4 28.6 9.4 20 C9.4 11.4 15.6 4.9 23.6 4.9 C31.5 4.9 37.4 11 37.4 19.5 Z M17.4 17.6 H29.6 C29.2 14 26.9 11.8 23.5 11.8 C20.2 11.8 17.9 14 17.4 17.6 Z" fill="url(#ieg)"/>
<ellipse cx="21" cy="19.5" rx="18.5" ry="7.5" transform="rotate(-40 21 19.5)" fill="none" stroke="#f2c21c" stroke-width="2.4"/></svg>
<div class="a" style="left:740px;top:1020px;width:73px;height:60px;background:#343434"></div>
<svg style="left:758px;top:1031px" width="36" height="38" viewBox="0 0 36 38">
<path d="M3.2 14.5 C5.5 7.8 11.5 3 18.5 3 C27 3 33 9.5 33 18.5 V21.5 H12.5 C12.8 27 16.5 30 21.5 30 C25 30 28 29 31.5 27 V33.5 C28.5 35 24.5 35.7 20.5 35.7 C11 35.7 5 29.5 5 21 C5 16 7.5 12 11.5 9.5 C8 10.5 5.2 12.5 3.2 14.5 Z M12.6 16 H24 C24 12.5 21.8 10.5 18.6 10.5 C15.5 10.5 13.2 12.5 12.6 16 Z" fill="#0b7ad6"/></svg>
<svg style="left:834px;top:1032.8px" width="34" height="34" viewBox="0 0 34 34">
<circle cx="16.8" cy="16.8" r="16.6" fill="#1ea25a"/>
<path d="M16.8 16.8 L2.4 8.5 A16.6 16.6 0 0 1 31.2 8.5 Z" fill="#db4437"/>
<path d="M16.8 16.8 L31.2 8.5 A16.6 16.6 0 0 1 16.8 33.4 Z" fill="#fcc934"/>
<circle cx="16.8" cy="16.8" r="7.2" fill="#f1f1f1"/><circle cx="16.8" cy="16.8" r="5.6" fill="#4e8bf0"/></svg>
<div class="a" style="left:821px;top:1077px;width:61px;height:3px;background:#76b9ed"></div>
<svg style="left:908px;top:1035px" width="36" height="30" viewBox="0 0 36 30">
<path d="M2 4 C2 2.8 2.8 2.2 4 2.2 H11 L13 3.6 H32.5 C33.6 3.6 34.1 4.2 34.1 5.2 V26 C34.1 27 33.5 27.4 32.5 27.4 H3.6 C2.6 27.4 2 27 2 26 Z" fill="#fde48d"/>
<path d="M2 4 C2 2.8 2.8 2.2 4 2.2 H11 L13 3.6 V6.2 H2 Z" fill="#f3c041"/><rect x="4" y="4" width="6" height="1" fill="#fff"/>
<path d="M7.5 28 V17.4 C7.5 16.4 8 15.5 9 15.5 H27.2 C28.2 15.5 28.6 16.4 28.6 17.4 V28 H24 V20 H12.2 V28 Z" fill="#3cb1e4"/></svg>
<svg style="left:983px;top:1032px" width="36" height="36" viewBox="0 0 36 36">
<rect x="16" y="6.2" width="17.5" height="23.5" rx="1" fill="#d04525"/><rect x="18" y="8.5" width="13" height="19" fill="#fff"/>
<path d="M24 11 A4.3 4.3 0 1 0 28.3 15.3 H24 Z" fill="#d04525"/><path d="M24.8 10.2 V14.5 H29 A4.3 4.3 0 0 0 24.8 10.2 Z" fill="#d04525"/>
<rect x="20" y="21" width="9.5" height="1.3" fill="#d04525"/><rect x="20" y="24" width="9.5" height="1.3" fill="#d04525"/>
<path d="M2 4.6 L20 2 V34 L2 31.4 Z" fill="#d24726"/>
<path d="M6.5 11 H11.5 C14.3 11 15.8 12.6 15.8 15 C15.8 17.5 14.2 19.2 11.3 19.2 H9.3 V24.5 H6.5 Z M9.3 13.3 V17 H11 C12.3 17 13 16.3 13 15.1 C13 14 12.3 13.3 11 13.3 Z" fill="#fff"/></svg>
<div class="a" style="left:971px;top:1077px;width:61px;height:3px;background:#76b9ed"></div>
<svg style="left:1058px;top:1032px" width="36" height="36" viewBox="0 0 36 36">
<rect x="16" y="9" width="17.5" height="17.7" rx="1.5" fill="#0a64c0"/><path d="M17.5 10.6 H32 V25 H17.5 Z" fill="#fff"/><path d="M17.5 10.6 L24.8 17.5 L32 10.6" fill="none" stroke="#0a64c0" stroke-width="1.6"/>
<path d="M2 4.6 L20 2 V34 L2 31.4 Z" fill="#0a72cf"/>
<ellipse cx="10.3" cy="18" rx="4.6" ry="6.2" fill="none" stroke="#fff" stroke-width="2.8"/></svg>
<div class="a" style="left:1046px;top:1077px;width:61px;height:3px;background:#76b9ed"></div>
<div class="a" style="left:1115px;top:1020px;width:73px;height:60px;background:linear-gradient(135deg,#3f3f3f,#4a4a4a)"></div>
<svg style="left:1133px;top:1032px" width="36" height="36" viewBox="0 0 36 36">
<defs><linearGradient id="wbg" x1="0" y1="0" x2="0" y2="1"><stop offset="0" stop-color="#2b2b2b"/><stop offset="1" stop-color="#050505"/></linearGradient>
<linearGradient id="wb1" x1="0" y1="0" x2="1" y2="1"><stop offset="0" stop-color="#17c6f2"/><stop offset="1" stop-color="#2a4fe6"/></linearGradient>
<linearGradient id="wb2" x1="0" y1="1" x2="1" y2="0"><stop offset="0" stop-color="#1a3ee0"/><stop offset="1" stop-color="#52e068"/></linearGradient></defs>
<rect x="0.3" y="0" width="35.4" height="35.9" rx="7" fill="url(#wbg)"/>
<g transform="translate(1.5 2.2) scale(1.05)" fill="none" stroke-width="5" stroke-linecap="round">
<path d="M6.3 8.6 C5.2 13.5 7.6 20.4 11.8 20.9 C14 21.1 15.4 19.3 16.2 17" stroke="#12c4f4"/>
<path d="M8.6 6.4 C10.3 4.3 14 4.3 15.6 7.6 C17.2 11 16.7 16.8 19.6 19.8 C22.2 22.4 25.6 21 26.8 16.5 C27.5 13.5 27.2 10.5 26.8 8.6" stroke="#2e64f4"/>
<path d="M17.2 8 C18.4 4.8 22.2 4.2 24.4 6.2 C25.4 7.2 25.8 9 25.2 10.8" stroke="url(#wb2)"/></g>
<path d="M21 22 H35.7 V30 C35.7 33.5 33.5 35.9 30 35.9 H21 Z" fill="#fff"/>
<rect x="23.8" y="25.2" width="7" height="6.6" rx="1.2" fill="#1d9a6c"/><path d="M30.3 27.8 L33.2 26 V31 L30.3 29.3 Z" fill="#1d9a6c"/></svg>
<div class="a" style="left:1115px;top:1077px;width:73px;height:3px;background:#76b9ed"></div>
<svg style="left:1205px;top:1032px" width="44" height="42" viewBox="0 0 44 42">
<circle cx="19.5" cy="6.3" r="5.3" fill="#7b83eb"/><circle cx="30.5" cy="8" r="3.8" fill="#5059c9"/>
<path d="M24 14.3 H34.3 C35 14.3 35.5 14.8 35.5 15.5 V24 C35.5 28 32.5 30 29.5 30 H24 Z" fill="#5059c9"/>
<path d="M11.2 14.3 H27.5 C28.3 14.3 28.8 14.9 28.8 15.7 V27.5 C28.8 33 24.8 37.5 19.5 37.5 C14.2 37.5 10.5 33 10.5 27.5 V15 Z" fill="#7b83eb"/>
<rect x="3" y="9.2" width="17.8" height="17.6" rx="1.5" fill="#4b53bc"/><path d="M7 13.3 H16.8 V15.6 H13.2 V23.2 H10.6 V15.6 H7 Z" fill="#fff"/>
<circle cx="32" cy="28.8" r="9.9" fill="#d11a33"/></svg>
<div class="t" style="left:1232px;top:1050px;font-size:15px;font-weight:bold;color:#fff">3</div>
<div class="a" style="left:1195.8px;top:1077px;width:61.2px;height:3px;background:#76b9ed"></div>
<svg style="left:1488px;top:1035px" width="30" height="30" viewBox="0 0 30 30" fill="none" stroke="#f0f0f0" stroke-width="1.5">
<circle cx="18.6" cy="7.2" r="3.6"/><path d="M14.4 13 C15.3 12 16.8 11.4 18.6 11.4 C21.6 11.4 23.8 13.5 24.3 16.6"/>
<circle cx="9.2" cy="16" r="3.6"/><path d="M3.5 25.9 C3.8 22.5 6.2 20.3 9.2 20.3 C12.2 20.3 14.6 22.5 15 25.9"/></svg>
<svg style="left:1550px;top:1040px" width="24" height="16" viewBox="0 0 24 16"><path d="M2.9 13.6 L12 4.8 L21.1 13.6" fill="none" stroke="#f0f0f0" stroke-width="1.5"/></svg>
<svg style="left:1598px;top:1038px" width="24" height="24" viewBox="0 0 24 24" fill="none" stroke="#f0f0f0" stroke-width="1.4">
<path d="M4.2 20.5 A16.3 16.3 0 0 1 20.5 4.2"/><path d="M9.2 20.5 A11.3 11.3 0 0 1 20.5 9.2"/><path d="M14.2 20.5 A6.3 6.3 0 0 1 20.5 14.2"/><circle cx="20.5" cy="20.5" r="1.3" fill="#f0f0f0" stroke="none"/></svg>
<svg style="left:1642px;top:1038px" width="34" height="22" viewBox="0 0 34 22">
<rect x="9.3" y="6.8" width="17.8" height="12" fill="none" stroke="#f0f0f0" stroke-width="1.3"/><rect x="11" y="8.5" width="14.6" height="8.7" fill="#f0f0f0"/><rect x="27.2" y="11" width="1.2" height="3.4" fill="#f0f0f0"/>
<path d="M5.4 3 V7.5 M9.3 3 V7.5 M4.6 7.6 H10.4 V10 C10.4 11.8 9.2 13 7.4 13 C5.7 13 4.6 11.8 4.6 10 Z M7.4 13 V19" fill="none" stroke="#f0f0f0" stroke-width="1.3"/></svg>

<div class="t" style="left:1691.19px;top:1041.52px;font-size:18.17px;color:#f0f0f0;transform:scaleX(0.9045);transform-origin:0 0;">ENG</div>
<div class="t" style="left:1750.58px;top:1027.77px;font-size:17.88px;color:#f0f0f0;transform:scaleX(0.9826);transform-origin:0 0;">12:55 PM</div>
<div class="t" style="left:1746.71px;top:1055.22px;font-size:18.17px;color:#f0f0f0;transform:scaleX(1.0175);transform-origin:0 0;">12/9/2021</div>
<svg style="left:1855px;top:1035px" width="40" height="40" viewBox="0 0 40 40">
<path d="M3 3.1 H26.9 V21.9 H16 L12.5 25.6 V21.9 H3 Z" fill="#fff"/><path d="M8 8.4 H21.8 M8 12.4 H21.8 M8 16.4 H17" stroke="#222" stroke-width="1.1"/>
<circle cx="26.3" cy="26.3" r="12.2" fill="#2b2b2b" stroke="#8a8a8a" stroke-width="1.1"/></svg>
<div class="t" style="left:1875.74px;top:1051.85px;font-size:18.60px;color:#fff;transform:scaleX(1.0283);transform-origin:0 0;">2</div>
<div class="a" style="left:1912px;top:1020px;width:1.5px;height:60px;background:#5a5a5a"></div>
</body></html>
